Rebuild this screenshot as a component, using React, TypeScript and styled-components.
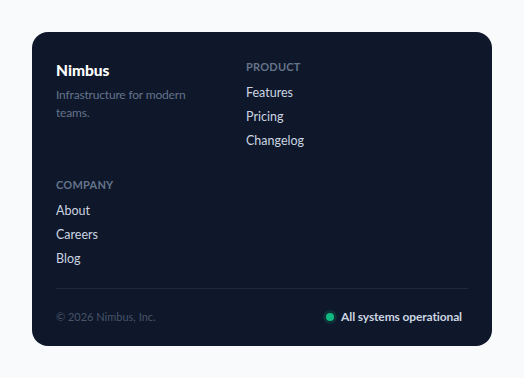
import React from "react";
import styled, { createGlobalStyle } from "styled-components";

const Global = createGlobalStyle`
  html, body { margin: 0; padding: 0; background: #f8fafc; }
  body { font-family: Lato, "Noto Sans", sans-serif; -webkit-font-smoothing: antialiased; }
  * { box-sizing: border-box; }
`;

const Page = styled.div`
  padding: 32px;
`;

const Footer = styled.footer`
  width: 460px;
  background: #0f172a;
  border-radius: 16px;
  padding: 28px 24px 22px;
  color: #cbd5e1;
`;

const Grid = styled.div`
  display: grid;
  grid-template-columns: 166px 1fr;
  column-gap: 24px;
  row-gap: 25px;
`;

const Brand = styled.div`
  display: flex;
  flex-direction: column;
  gap: 6px;
`;

const Logo = styled.div`
  font-size: 15.5px;
  font-weight: 900;
  color: #ffffff;
  line-height: 20px;
`;

const Tagline = styled.p`
  margin: 0;
  max-width: 140px;
  font-size: 12px;
  letter-spacing: -0.015em;
  line-height: 18px;
  color: #64748b;
`;

const Column = styled.div`
  display: flex;
  flex-direction: column;
`;

const Heading = styled.h4`
  margin: 0 0 7px;
  font-size: 11px;
  font-weight: 700;
  letter-spacing: 0.02em;
  line-height: 14px;
  text-transform: uppercase;
  color: #64748b;
`;

const LinkList = styled.ul`
  list-style: none;
  margin: 0;
  padding: 0;
  display: flex;
  flex-direction: column;
`;

const LinkItem = styled.li`
  font-size: 12.5px;
  line-height: 24px;
  color: #cbd5e1;
`;

const Bottom = styled.div`
  margin-top: 17px;
  border-top: 1px solid #1e293b;
  padding-top: 20px;
  display: flex;
  justify-content: space-between;
  align-items: center;
`;

const Copyright = styled.span`
  font-size: 11px;
  color: #475569;
`;

const Status = styled.span`
  display: flex;
  align-items: center;
  gap: 7px;
  font-size: 12px;
  letter-spacing: -0.01em;
  font-weight: 700;
  color: #cbd5e1;
  padding-right: 6px;
`;

const Dot = styled.span`
  width: 8px;
  height: 8px;
  border-radius: 50%;
  background: #10b981;
  box-shadow: 0 0 0 3px rgba(16, 185, 129, 0.15);
`;

const columns = [
  { title: "Product", links: ["Features", "Pricing", "Changelog"] },
  { title: "Company", links: ["About", "Careers", "Blog"] },
];

export default function App() {
  return (
    <Page>
      <Global />
      <Footer>
        <Grid>
          <Brand>
            <Logo>Nimbus</Logo>
            <Tagline>Infrastructure for modern teams.</Tagline>
          </Brand>
          {columns.map((c) => (
            <Column key={c.title}>
              <Heading>{c.title}</Heading>
              <LinkList>
                {c.links.map((l) => (
                  <LinkItem key={l}>{l}</LinkItem>
                ))}
              </LinkList>
            </Column>
          ))}
        </Grid>
        <Bottom>
          <Copyright>© 2026 Nimbus, Inc.</Copyright>
          <Status>
            <Dot />
            All systems operational
          </Status>
        </Bottom>
      </Footer>
    </Page>
  );
}
